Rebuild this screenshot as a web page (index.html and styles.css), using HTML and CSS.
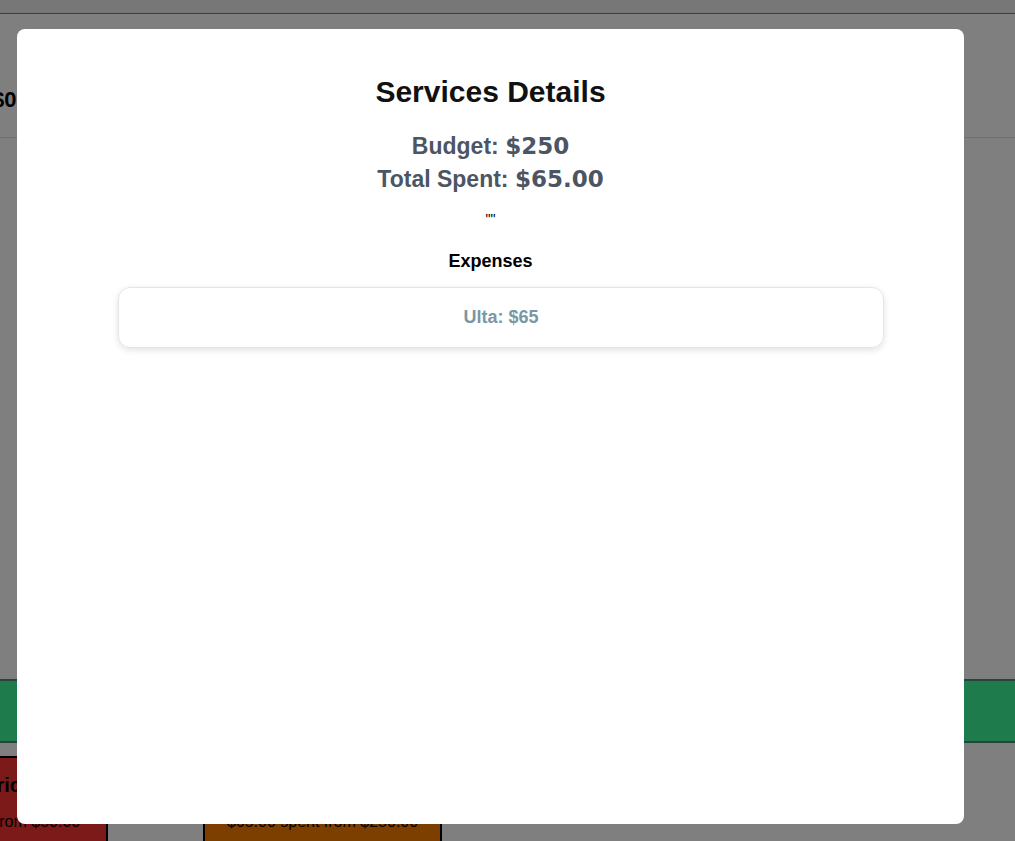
FILE: index.html
```html
<!DOCTYPE html>
<html>
<head>
<meta charset="utf-8">
<link rel="stylesheet" href="styles.css">
</head>
<body>
<div class="page">
  <div class="navbar"></div>
  <div class="summary"><span class="summary-value">$0</span></div>
  <div class="content"></div>
  <div class="total-bar"></div>
  <div class="cards">
    <div class="card card-red">
      <div class="card-title">Electricity</div>
      <div class="card-sub">$0.00 spent from $50.00</div>
    </div>
    <div class="card card-orange">
      <div class="card-title">Services</div>
      <div class="card-sub">$65.00 spent from $250.00</div>
    </div>
  </div>
</div>

<div class="overlay">
  <div class="modal">
    <h2 class="modal-title">Services Details</h2>
    <div class="modal-line">Budget: <span class="amount">$250</span></div>
    <div class="modal-line">Total Spent: <span class="amount">$65.00</span></div>
    <p class="note">""</p>
    <h4 class="section-title">Expenses</h4>
    <ul class="expense-list">
      <li class="expense">Ulta: $65</li>
    </ul>
  </div>
</div>
</body>
</html>
```

FILE: styles.css
```css
* { box-sizing: border-box; }

html, body {
  margin: 0;
  padding: 0;
  height: 100%;
  overflow: hidden;
}

body {
  font-family: "Liberation Sans", Arial, sans-serif;
  background: #ffffff;
  color: #000;
}

.page {
  width: 100%;
}

.navbar {
  height: 14px;
  background: #eeeeee;
  border-bottom: 1px solid #7a7a7a;
}

.summary {
  height: 124px;
  border-bottom: 1px solid #e0e0e0;
  display: flex;
  align-items: center;
  padding-top: 48px;
}

.summary-value {
  margin-left: -8px;
  font-size: 22px;
  font-weight: bold;
  color: #000;
}

.content {
  height: 541px;
}

.total-bar {
  height: 64px;
  background: #3cf696;
  border-top: 2px solid #4e8c74;
  border-bottom: 2px solid #4e8c74;
}

.cards {
  display: flex;
  gap: 95px;
  margin-top: 13px;
  margin-left: -131px;
}

.card {
  width: 239px;
  height: 100px;
  border: 2px solid #000;
  text-align: center;
  padding-top: 16px;
}

.card-red { background: #f83434; }
.card-orange { background: #f87e00; }

.card-title {
  font-size: 20px;
  font-weight: bold;
  margin-bottom: 16px;
}

.card-sub {
  font-size: 16px;
}

.card-red .card-title { padding-left: 16px; }
.card-red .card-sub { padding-left: 10px; }

.overlay {
  position: fixed;
  inset: 0;
  background: rgba(0, 0, 0, 0.5);
  display: flex;
  align-items: flex-start;
  padding: 29px 0 0 17px;
}

.modal {
  width: 947px;
  height: 795px;
  background: #ffffff;
  border-radius: 8px;
  padding-top: 46px;
  text-align: center;
}

.modal-title {
  margin: 0 0 21px;
  font-size: 30px;
  line-height: 34px;
  font-weight: bold;
  color: #111111;
}

.modal-line {
  font-size: 23px;
  line-height: 33px;
  font-weight: bold;
  color: #4b5563;
}

.amount {
  font-family: "DejaVu Sans", sans-serif;
  font-weight: bold;
}

.note {
  margin: 15px 0 0;
  font-size: 14px;
  color: #000;
}

.section-title {
  margin: 24px 0 0;
  font-size: 18px;
  font-weight: bold;
  color: #000;
}

.expense-list {
  list-style: none;
  margin: 15px 80px 0 101px;
  padding: 0;
}

.expense {
  height: 61px;
  display: flex;
  align-items: center;
  justify-content: center;
  border: 1px solid #e5e5e5;
  border-radius: 12px;
  box-shadow: 0 2px 6px rgba(0, 0, 0, 0.12);
  font-size: 18px;
  font-weight: bold;
  color: #7a97a6;
}
```
